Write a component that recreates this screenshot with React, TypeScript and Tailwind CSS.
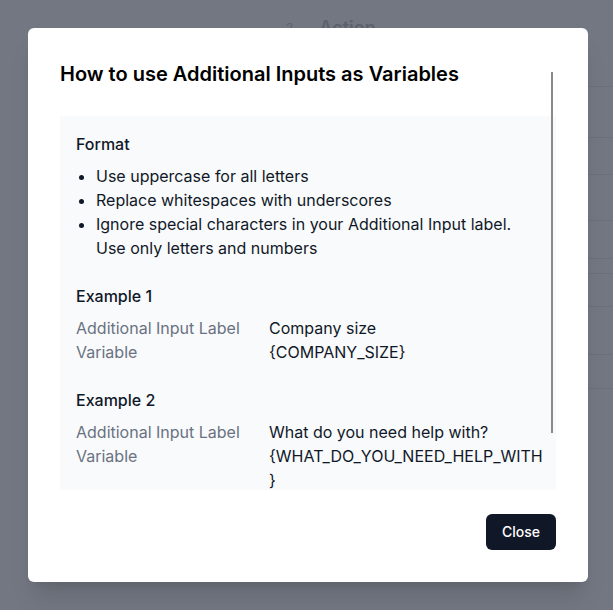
import React from 'react';

const examples = [
  { title: 'Example 1', label: 'Company size', variable: '{COMPANY_SIZE}' },
  { title: 'Example 2', label: 'What do you need help with?', variable: '{WHAT_DO_YOU_NEED_HELP_WITH}' },
];

const rules = [
  'Use uppercase for all letters',
  'Replace whitespaces with underscores',
  'Ignore special characters in your Additional Input label. Use only letters and numbers',
];

const App: React.FC = () => {
  return (
    <div
      className="relative w-[613px] h-[610px] overflow-hidden bg-[#737782]"
      style={{ fontFamily: 'Inter, "Noto Sans", sans-serif' }}
    >
      {/* Dimmed page behind the overlay */}
      <div className="absolute left-[286px] top-[14px] flex items-center gap-[26px] text-[#5d616b]">
        <span className="text-xs">2</span>
        <span className="text-lg font-semibold">Action</span>
      </div>
      <div className="absolute right-0 top-0 w-[40px] flex flex-col">
        <div className="h-[87px] border-b border-[#6c707b]" />
        <div className="h-[51px] border-b border-[#6c707b]" />
        <div className="h-[37px] border-b border-[#6c707b]" />
        <div className="h-[46px] border-b border-[#6c707b]" />
        <div className="h-[38px] border-b border-[#6c707b]" />
        <div className="h-[96px] border-b border-[#6c707b]" />
        <div className="h-[34px] border-b border-[#6c707b]" />
      </div>
      <div className="absolute left-[575px] top-[273px] w-[60px] h-[34px] rounded-md border border-[#6c707b] flex items-center pl-1 text-sm font-medium text-[#5d616b]">
        y
      </div>

      {/* Modal */}
      <div className="absolute left-[28px] top-[28px] w-[560px] h-[554px] bg-white rounded-md shadow-xl p-8 flex flex-col">
        <h2 className="text-xl leading-7 font-semibold text-black">
          How to use Additional Inputs as Variables
        </h2>

        <div className="mt-7 h-[374px] overflow-hidden">
          <div className="bg-gray-50 p-4 text-base leading-6 text-gray-900">
            <h3 className="font-medium">Format</h3>
            <ul className="mt-2 list-disc pl-5">
              {rules.map((r) => (
                <li key={r}>{r}</li>
              ))}
            </ul>

            {examples.map((ex) => (
              <div key={ex.title} className="mt-6">
                <h3 className="font-medium">{ex.title}</h3>
                <div className="mt-2 grid grid-cols-[193px_276px]">
                  <span className="text-gray-500">Additional Input Label</span>
                  <span>{ex.label}</span>
                  <span className="text-gray-500">Variable</span>
                  <span className="min-w-0 break-words">{ex.variable}</span>
                </div>
              </div>
            ))}
          </div>
        </div>

        <div className="mt-6 flex justify-end">
          <button className="h-9 px-4 rounded-md bg-gray-900 text-white text-sm font-medium">
            Close
          </button>
        </div>

        {/* scrollbar thumb */}
        <div className="absolute left-[523px] top-[44px] w-[2px] h-[361px] bg-[#8a8a8a]" />
      </div>
    </div>
  );
};

export default App;
